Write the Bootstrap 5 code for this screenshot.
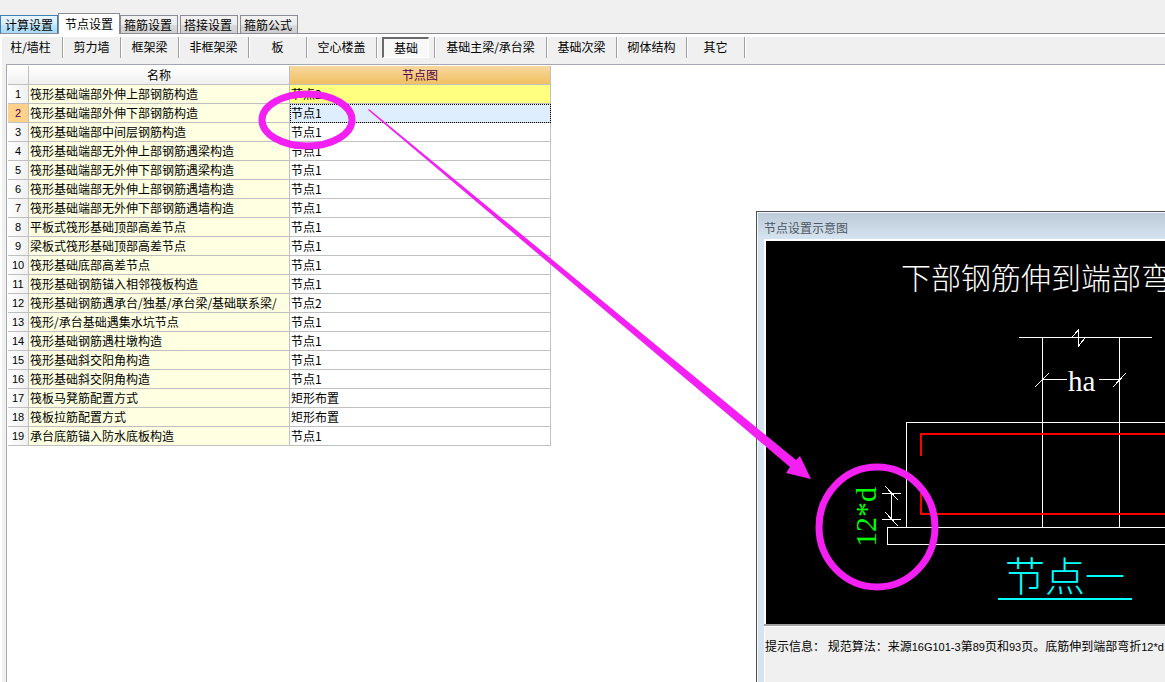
<!DOCTYPE html>
<html lang="zh-CN">
<head>
<meta charset="utf-8">
<meta name="viewport" content="width=device-width, initial-scale=1">
<title>节点设置</title>
<link rel="stylesheet" href="https://cdn.jsdelivr.net/npm/bootstrap@5.3.0/dist/css/bootstrap.min.css">
<style>
body { background: #f0f0f0; color: #000; font: 12px/18px "Noto Sans CJK SC", sans-serif; }
button { font: inherit; color: inherit; padding: 0; border: 0; background: none; white-space: nowrap; }
.tab-strip { padding-top: 13px; border-bottom: 1px solid #8c8c98; }
.tab-btn { height: 18px; padding: 0 5px 0 3px; margin-right: 2px; border: 1px solid #898c95; border-bottom: 0; background: linear-gradient(#f2f2f2, #ebebeb 50%, #dcdcdc 51%, #cecece); }
.tab-btn.hot { padding: 0 4px; margin-right: 0; border-color: #3c7fb1; background: linear-gradient(#eaf6fd, #d2ebfa 50%, #bee6fd 51%, #a7d9f5); }
.tab-btn.current { padding: 0 6px; height: 21px; margin-right: 0; margin-bottom: -1px; background: #fff; }
.page-body { border-top: 3px solid #fff; border-left: 2px solid #fff; }
.tool-cell { width: 58px; height: 21px; border-right: 1px solid #a0a0a0; box-shadow: 1px 0 #fff; flex: none; }
.tool-cell.first { width: 61px; padding-right: 3px; }
.tool-cell.wide { width: 70px; }
.tool-cell.extra { width: 112px; }
.tool-cell button { width: 100%; height: 20px; }
.tool-cell button.pressed { width: 47px; height: 21px; border: 1px solid #fff; border-top: 2px solid #696969; border-left: 2px solid #696969; background: #f8f8f8; }
.grid-pane { margin: 6px 0 0 4px; border: 1px solid #a5a8b2; border-right: 0; border-bottom: 0; background: #fff; padding: 1px; }
.node-grid { width: 543px; table-layout: fixed; border-collapse: separate; border-spacing: 0; }
.node-grid th, .node-grid td { height: 19px; padding: 0 2px; font-weight: 400; border-right: 1px solid #c0c0c0; border-bottom: 1px solid #c0c0c0; white-space: nowrap; overflow: hidden; }
.node-grid td { padding-left: 1px; }
.node-grid th { text-align: center; background: linear-gradient(#fff, #f0f0f0); }
.node-grid thead th:last-child { background: linear-gradient(#f8d8a0, #f0c060); color: #500050; }
.node-grid tbody th { font-family: "Liberation Sans", sans-serif; font-size: 11px; padding: 0; background: linear-gradient(90deg, #fff, #f0f0f0); }
.node-grid .name-cell { background: #ffffe1; }
.node-grid .changed { background: #ffff80; }
.node-grid tr.chosen th { background: #ffd28c; color: #500050; }
.node-grid tr.chosen td:last-child { background: #dfeefe; outline: 1px dotted #000; outline-offset: -1px; }
.preview-window { left: 756px; top: 211px; right: 0; bottom: 0; border: 1px solid #505050; border-right: 0; border-bottom: 0; background: #d6e3f0; box-shadow: inset 1px 1px #f4f8fc; padding-left: 7px; overflow: hidden; }
.preview-title { height: 26px; padding-top: 6px; margin: 1px 0 0 -6px; padding-left: 6px; color: #4d5660; background: linear-gradient(#bccad9, #d6e3f0); }
.drawing-area { border: 2px solid #fff; border-right: 0; border-bottom: 0; background: #000; }
.drawing-area svg { width: 100%; height: 383px; }
.cad-text { font-family: "Noto Sans CJK SC", sans-serif; font-weight: 300; }
.dim-text { font-family: "Liberation Serif", serif; }
.hint-area { background: #f0f0f0; border-top: 2px solid #a0a0a0; box-shadow: inset 1px 1px #fff; padding: 11px 0 0 1px; white-space: nowrap; }
.num { font-family: "Liberation Sans", sans-serif; font-size: 11px; }
.marks { pointer-events: none; }
</style>
</head>
<body>
<main class="position-relative vh-100 overflow-hidden d-flex flex-column">
  <nav class="tab-strip d-flex align-items-end" aria-label="设置分类">
    <button type="button" class="tab-btn hot">计算设置</button>
    <button type="button" class="tab-btn current">节点设置</button>
    <button type="button" class="tab-btn">箍筋设置</button>
    <button type="button" class="tab-btn">搭接设置</button>
    <button type="button" class="tab-btn">箍筋公式</button>
  </nav>
  <div class="page-body flex-grow-1 d-flex flex-column">
    <div class="d-flex" role="toolbar" aria-label="构件类型">
      <div class="tool-cell first"><button type="button">柱/墙柱</button></div>
      <div class="tool-cell"><button type="button">剪力墙</button></div>
      <div class="tool-cell"><button type="button">框架梁</button></div>
      <div class="tool-cell wide"><button type="button">非框架梁</button></div>
      <div class="tool-cell"><button type="button">板</button></div>
      <div class="tool-cell wide"><button type="button">空心楼盖</button></div>
      <div class="tool-cell d-flex justify-content-center"><button type="button" class="pressed">基础</button></div>
      <div class="tool-cell extra"><button type="button">基础主梁/承台梁</button></div>
      <div class="tool-cell wide"><button type="button">基础次梁</button></div>
      <div class="tool-cell wide"><button type="button">砌体结构</button></div>
      <div class="tool-cell"><button type="button">其它</button></div>
    </div>
    <div class="grid-pane flex-grow-1">
      <table class="node-grid">
        <colgroup><col style="width:21px"><col style="width:261px"><col style="width:261px"></colgroup>
        <thead><tr><th></th><th>名称</th><th>节点图</th></tr></thead>
        <tbody>
          <tr><th>1</th><td class="name-cell">筏形基础端部外伸上部钢筋构造</td><td class="changed">节点2</td></tr>
          <tr class="chosen"><th>2</th><td class="name-cell">筏形基础端部外伸下部钢筋构造</td><td>节点1</td></tr>
          <tr><th>3</th><td class="name-cell">筏形基础端部中间层钢筋构造</td><td>节点1</td></tr>
          <tr><th>4</th><td class="name-cell">筏形基础端部无外伸上部钢筋遇梁构造</td><td>节点1</td></tr>
          <tr><th>5</th><td class="name-cell">筏形基础端部无外伸下部钢筋遇梁构造</td><td>节点1</td></tr>
          <tr><th>6</th><td class="name-cell">筏形基础端部无外伸上部钢筋遇墙构造</td><td>节点1</td></tr>
          <tr><th>7</th><td class="name-cell">筏形基础端部无外伸下部钢筋遇墙构造</td><td>节点1</td></tr>
          <tr><th>8</th><td class="name-cell">平板式筏形基础顶部高差节点</td><td>节点1</td></tr>
          <tr><th>9</th><td class="name-cell">梁板式筏形基础顶部高差节点</td><td>节点1</td></tr>
          <tr><th>10</th><td class="name-cell">筏形基础底部高差节点</td><td>节点1</td></tr>
          <tr><th>11</th><td class="name-cell">筏形基础钢筋锚入相邻筏板构造</td><td>节点1</td></tr>
          <tr><th>12</th><td class="name-cell">筏形基础钢筋遇承台/独基/承台梁/基础联系梁/</td><td>节点2</td></tr>
          <tr><th>13</th><td class="name-cell">筏形/承台基础遇集水坑节点</td><td>节点1</td></tr>
          <tr><th>14</th><td class="name-cell">筏形基础钢筋遇柱墩构造</td><td>节点1</td></tr>
          <tr><th>15</th><td class="name-cell">筏形基础斜交阳角构造</td><td>节点1</td></tr>
          <tr><th>16</th><td class="name-cell">筏形基础斜交阴角构造</td><td>节点1</td></tr>
          <tr><th>17</th><td class="name-cell">筏板马凳筋配置方式</td><td>矩形布置</td></tr>
          <tr><th>18</th><td class="name-cell">筏板拉筋配置方式</td><td>矩形布置</td></tr>
          <tr><th>19</th><td class="name-cell">承台底筋锚入防水底板构造</td><td>节点1</td></tr>
        </tbody>
      </table>
    </div>
  </div>

  <section class="preview-window position-absolute d-flex flex-column" aria-label="节点设置示意图">
    <div class="preview-title">节点设置示意图</div>
    <div class="drawing-area">
      <svg class="d-block" fill="none" stroke="#fff" shape-rendering="crispEdges">
        <!-- column between break line and slab -->
        <path d="M253 96.5H386M276.5 96V286M353.5 96V286"/>
        <path d="M306 96L312.500 89V105L319 97"/>
        <!-- column width dimension -->
        <path d="M277 138.500H301M333 138.500H353M269 146L283 132M347 146L360 132"/>
        <!-- slab and bedding -->
        <path d="M2000 181.500H140.500V286M2000 286.500H121.500V303.500H2000"/>
        <!-- reinforcement -->
        <path stroke="#f00" stroke-width="2" d="M155 215V193H2000M155 252V273H2000"/>
        <!-- bend length dimension -->
        <path d="M116 252.500H135M116 278.500H135M125.500 252V278M119 245L132 259M119 271L132 285"/>
        <path stroke="#0ff" stroke-width="2" d="M232 358H366"/>
        <g stroke="none" fill="#fff">
          <text class="cad-text" x="135" y="48" font-size="30">下部钢筋伸到端部弯</text>
          <text class="dim-text" x="302" y="150" font-size="29">ha</text>
          <text class="dim-text" transform="translate(110 306) rotate(-90)" font-size="30" fill="#0f0">12*d</text>
          <text class="cad-text" x="239" y="350" font-size="40" fill="#0ff">节点一</text>
        </g>
      </svg>
    </div>
    <div class="hint-area flex-grow-1">提示信息： 规范算法：来源<span class="num">16G101-3</span>第<span class="num">89</span>页和<span class="num">93</span>页。底筋伸到端部弯折<span class="num">12*d</span></div>
  </section>

  <svg class="marks position-absolute top-0 start-0 w-100 h-100" fill="none" stroke="#f31ff3" stroke-width="7" aria-hidden="true">
    <ellipse cx="307" cy="120" rx="45" ry="26"/>
    <ellipse cx="877" cy="527" rx="58" ry="60"/>
    <path stroke="none" fill="#f31ff3" d="M368 110L369 109L796 460L800 456L811 479L786 473L790 467Z"/>
  </svg>
</main>
<script src="https://cdn.jsdelivr.net/npm/bootstrap@5.3.0/dist/js/bootstrap.bundle.min.js"></script>
</body>
</html>
